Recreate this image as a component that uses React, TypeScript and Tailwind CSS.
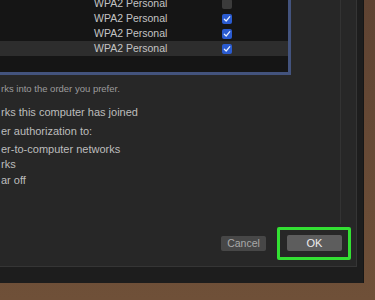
import React from "react";

function Check({ on }: { on: boolean }) {
  if (!on) {
    return <div className="w-[10px] h-[10px] rounded-[2px] bg-[#3b3b3b]" />;
  }
  return (
    <div className="w-[10px] h-[10px] rounded-[2px] bg-[#2a5bd0] flex items-center justify-center">
      <svg width="8" height="8" viewBox="0 0 8 8">
        <path d="M1.3 4.2 L3.2 6 L6.8 1.6" fill="none" stroke="#e8efff" strokeWidth="1.2" strokeLinecap="round" strokeLinejoin="round" />
      </svg>
    </div>
  );
}

export default function App() {
  const rows = [false, true, true, true];
  const font = { fontFamily: '"Liberation Sans", Arial, sans-serif' };
  return (
    <div className="w-[375px] h-[300px] overflow-hidden bg-gradient-to-b from-[#5f4332] to-[#6f5038]" style={font}>
      <div className="w-[364px] h-[283px] bg-[#1d1d1d] border-r border-[#161616]">
        <div className="w-[357px] h-[267px] bg-[#272727] border-r border-b border-[#353535] flex flex-col">
          <div className="w-[341px] h-[224px] border-r border-[#333333]">
            <div className="w-[291px] h-[75px] bg-[#151515] border-r-[3px] border-b-[3px] border-[#43537d] overflow-hidden">
              <div className="mt-[-4px]">
                {rows.map((on, i) => (
                  <div
                    key={i}
                    className={`h-[15px] flex items-center ${i === 3 ? "bg-[#2d2d2d]" : ""}`}
                  >
                    <span className="ml-[94px] w-[128px] text-[10.5px] leading-[15px] text-[#c4c4c4]">
                      WPA2 Personal
                    </span>
                    <Check on={on} />
                  </div>
                ))}
              </div>
            </div>
            <div className="pl-[1px]">
              <div className="mt-[7px] h-[13px] leading-[13px] text-[9.5px] text-[#9c9c9c]">
                rks into the order you prefer.
              </div>
              <div className="mt-[10px] h-[14px] leading-[14px] text-[11px] text-[#bdbdbd]">
                rks this computer has joined
              </div>
              <div className="mt-[5px] h-[14px] leading-[14px] text-[11px] text-[#bdbdbd]">
                er authorization to:
              </div>
              <div className="mt-[4px] h-[14px] leading-[14px] text-[11px] text-[#bdbdbd]">
                er-to-computer networks
              </div>
              <div className="mt-[1px] h-[14px] leading-[14px] text-[11px] text-[#bdbdbd]">
                rks
              </div>
              <div className="mt-[2px] h-[14px] leading-[14px] text-[11px] text-[#bdbdbd]">
                ar off
              </div>
            </div>
          </div>
          <div className="flex items-center ml-[221px] mt-[3px]">
            <div className="w-[45px] h-[15px] rounded-[2px] bg-[#474747] text-[#a9a9a9] text-[10.5px] leading-[15px] text-center">
              Cancel
            </div>
            <div className="ml-[11px] w-[74px] h-[33px] rounded-[2px] border-[3px] border-[#33e033] pl-[7px] pt-[5px]">
              <div className="w-[55px] h-[16px] rounded-[2px] bg-[#5d5d5d] text-[#ededed] text-[11px] leading-[16px] text-center">
                OK
              </div>
            </div>
          </div>
        </div>
      </div>
    </div>
  );
}
